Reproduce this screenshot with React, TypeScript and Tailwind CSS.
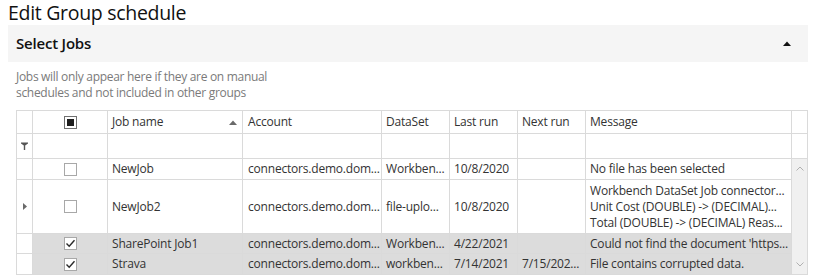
import React from "react";

const W = ["w-[16px]", "w-[75px]", "w-[135px]", "w-[139px]", "w-[68px]", "w-[68px]", "w-[68px]", "w-[206px]"];

function Box({ state }: { state: "empty" | "checked" | "partial" }) {
  return (
    <div
      className={`w-[13px] h-[13px] bg-white border flex items-center justify-center ${
        state === "partial" ? "border-[#707070]" : "border-[#a8a8a8]"
      }`}
    >
      {state === "partial" && <div className="w-[7px] h-[7px] bg-[#1e1e1e]" />}
      {state === "checked" && (
        <svg width="11" height="11" viewBox="0 0 11 11">
          <path d="M1.5 5.5 L4.2 8.2 L9.5 2.2" fill="none" stroke="#2a2a2a" strokeWidth="1.4" />
        </svg>
      )}
    </div>
  );
}

function Cell({
  i,
  children,
  className = "",
}: {
  i: number;
  children?: React.ReactNode;
  className?: string;
}) {
  return (
    <div className={`${W[i]} shrink-0 border-r border-b border-[#dadada] overflow-hidden whitespace-nowrap ${className}`}>
      {children}
    </div>
  );
}

type Row = {
  name: string;
  account: string;
  dataset: string;
  last: string;
  next: string;
  msg: string[];
  checked: boolean;
  h: string;
  expand?: boolean;
};

const rows: Row[] = [
  { name: "NewJob", account: "connectors.demo.dom...", dataset: "Workben...", last: "10/8/2020", next: "", msg: ["No file has been selected"], checked: false, h: "h-[21px]" },
  {
    name: "NewJob2",
    account: "connectors.demo.dom...",
    dataset: "file-uplo...",
    last: "10/8/2020",
    next: "",
    msg: ["Workbench DataSet Job connector...", "Unit Cost (DOUBLE) -> (DECIMAL)...", "Total (DOUBLE) -> (DECIMAL) Reas..."],
    checked: false,
    h: "h-[54px]",
    expand: true,
  },
  { name: "SharePoint Job1", account: "connectors.demo.dom...", dataset: "Workben...", last: "4/22/2021", next: "", msg: ["Could not find the document 'https..."], checked: true, h: "h-[20px]" },
  { name: "Strava", account: "connectors.demo.dom...", dataset: "workben...", last: "7/14/2021", next: "7/15/202...", msg: ["File contains corrupted data."], checked: true, h: "h-[21px]" },
];

export default function App() {
  return (
    <div className="w-[820px] h-[280px] bg-white overflow-hidden text-[#222]" style={{ fontFamily: '"Open Sans", "Noto Sans", sans-serif' }}>
      <div className="pl-[8px] h-[25px] text-[19.5px] leading-[25px] text-[#111] tracking-[-0.3px]">Edit Group schedule</div>
      <div className="ml-[8px] w-[800px] h-[37px] bg-[#f5f5f5] flex items-center justify-between pl-[8px] pr-[17px]">
        <span className="text-[15px] font-semibold text-[#111] tracking-[-0.2px]">Select Jobs</span>
        <svg width="8" height="5" viewBox="0 0 8 5">
          <path d="M0 5 L4 0.5 L8 5 Z" fill="#111" />
        </svg>
      </div>
      <div className="pl-[16px] pt-[7px] h-[48px] text-[12px] leading-[16px] text-[#7a7a7a] tracking-[-0.3px]">
        <div>Jobs will only appear here if they are on manual</div>
        <div>schedules and not included in other groups</div>
      </div>
      <div className="ml-[16px] w-[792px] border-l border-t border-[#dadada] text-[12px] text-[#333] tracking-[-0.2px]">
        {/* header */}
        <div className="flex h-[23px]">
          <Cell i={0} />
          <Cell i={1} className="flex items-center justify-center">
            <Box state="partial" />
          </Cell>
          <Cell i={2} className="flex items-center justify-between pl-[4px] pr-[5px]">
            <span>Job name</span>
            <svg width="8" height="5" viewBox="0 0 8 5">
              <path d="M0 5 L4 0.5 L8 5 Z" fill="#6a6a6a" />
            </svg>
          </Cell>
          <Cell i={3} className="flex items-center pl-[5px]">Account</Cell>
          <Cell i={4} className="flex items-center pl-[4px]">DataSet</Cell>
          <Cell i={5} className="flex items-center pl-[4px]">Last run</Cell>
          <Cell i={6} className="flex items-center pl-[4px]">Next run</Cell>
          <Cell i={7} className="flex items-center pl-[4px]">Message</Cell>
          <div className="w-[16px] border-r border-b border-[#dadada]" />
        </div>
        {/* filter row */}
        <div className="flex h-[25px]">
          <Cell i={0} className="flex items-center justify-center">
            <svg width="7" height="8" viewBox="0 0 7 8">
              <path d="M0 0.5 H7 V1.5 L4.2 3.5 V8 H2.8 V3.5 L0 1.5 Z" fill="#555" />
            </svg>
          </Cell>
          <Cell i={1} />
          <Cell i={2} />
          <Cell i={3} />
          <Cell i={4} />
          <Cell i={5} />
          <Cell i={6} />
          <Cell i={7} />
          <div className="w-[16px] border-r border-b border-[#dadada]" />
        </div>
        {/* data */}
        <div className="flex">
          <div className="flex flex-col">
            {rows.map((r) => (
              <div key={r.name} className={`flex ${r.h} ${r.checked ? "bg-[#dcdcdc]" : "bg-white"}`}>
                <Cell i={0} className="flex items-center justify-center bg-white">
                  {r.expand && (
                    <svg width="4" height="7" viewBox="0 0 4 7">
                      <path d="M0 0 L4 3.5 L0 7 Z" fill="#6a6a6a" />
                    </svg>
                  )}
                </Cell>
                <Cell i={1} className="flex items-center justify-center">
                  <Box state={r.checked ? "checked" : "empty"} />
                </Cell>
                <Cell i={2} className="flex items-center pl-[4px]">{r.name}</Cell>
                <Cell i={3} className="flex items-center pl-[5px]">{r.account}</Cell>
                <Cell i={4} className="flex items-center pl-[4px]">{r.dataset}</Cell>
                <Cell i={5} className="flex items-center pl-[4px]">{r.last}</Cell>
                <Cell i={6} className="flex items-center pl-[4px]">{r.next}</Cell>
                <Cell i={7} className="flex flex-col justify-center pl-[4px] leading-[16px]">
                  {r.msg.map((m) => (
                    <div key={m}>{m}</div>
                  ))}
                </Cell>
              </div>
            ))}
          </div>
          <div className="w-[16px] bg-[#f0f0f0] border-r border-b border-[#dadada] flex flex-col justify-between items-center py-[7px]">
            <svg width="8" height="5" viewBox="0 0 8 5">
              <path d="M0.5 4.5 L4 1 L7.5 4.5" fill="none" stroke="#b0b0b0" strokeWidth="1" />
            </svg>
            <svg width="8" height="5" viewBox="0 0 8 5">
              <path d="M0.5 0.5 L4 4 L7.5 0.5" fill="none" stroke="#b0b0b0" strokeWidth="1" />
            </svg>
          </div>
        </div>
      </div>
    </div>
  );
}
